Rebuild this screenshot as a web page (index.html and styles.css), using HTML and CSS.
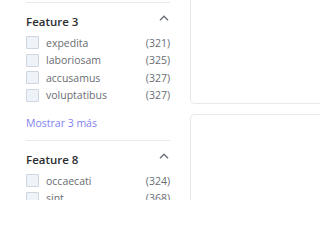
FILE: index.html
```html
<!DOCTYPE html>
<html>
<head>
<meta charset="utf-8">
<link rel="stylesheet" href="styles.css">
</head>
<body>
<div class="page">
  <aside class="sidebar">
    <section class="group">
      <div class="head"><span class="title">Feature 3</span><svg class="chev" width="10" height="6" viewBox="0 0 10 6"><path d="M1 5.2 L5 1.2 L9 5.2" fill="none" stroke="#6b6f75" stroke-width="1.4"/></svg></div>
      <ul class="list">
        <li><span class="box"></span><span class="name">expedita</span><span class="count">(321)</span></li>
        <li><span class="box"></span><span class="name">laboriosam</span><span class="count">(325)</span></li>
        <li><span class="box"></span><span class="name">accusamus</span><span class="count">(327)</span></li>
        <li><span class="box"></span><span class="name">voluptatibus</span><span class="count">(327)</span></li>
      </ul>
      <a class="more">Mostrar 3 más</a>
    </section>
    <section class="group">
      <div class="head"><span class="title">Feature 8</span><svg class="chev" width="10" height="6" viewBox="0 0 10 6"><path d="M1 5.2 L5 1.2 L9 5.2" fill="none" stroke="#6b6f75" stroke-width="1.4"/></svg></div>
      <ul class="list">
        <li><span class="box"></span><span class="name">occaecati</span><span class="count">(324)</span></li>
        <li><span class="box"></span><span class="name">sint</span><span class="count">(368)</span></li>
      </ul>
    </section>
  </aside>
  <div class="main">
    <div class="card card-top"></div>
    <div class="card card-next"></div>
  </div>
</div>
</body>
</html>
```
FILE: styles.css
```css
html, body { margin: 0; padding: 0; background: #fff; }
body { font-family: "Open Sans", "Liberation Sans", sans-serif; overflow: hidden; }
.page { display: flex; height: 200px; }
.sidebar { width: 144px; padding-left: 26px; padding-top: 2px; flex: none; }
.group { border-top: 1px solid #e5eaee; padding-top: 9px; }
.head { display: flex; justify-content: space-between; align-items: center; height: 18px; }
.title { font-size: 11.5px; font-weight: 600; color: #2b2d30; }
.chev { margin-right: 1px; margin-top: -6px; }
.list { list-style: none; margin: 4px 0 0; padding: 0; }
.list li { display: flex; align-items: center; height: 17.5px; font-size: 10.5px; color: #6a6d72; }
.box { width: 11px; height: 11px; border: 1px solid #cfd6e0; background: #eef2f9; border-radius: 1px; flex: none; margin-right: 7px; }
.name { flex: 1; }
.count { color: #6a6d72; }
.more { display: block; margin-top: 12px; margin-bottom: 9px; line-height: 15px; font-size: 10.5px; color: #7f7ff2; }
.main { margin-left: 20px; flex: 1; }
.card { border: 1px solid #e6eaee; border-right: none; }
.card-top { height: 107px; margin-top: -4px; border-top: none; border-radius: 0 0 0 5px; }
.card-next { margin-top: 10px; height: 120px; border-bottom: none; border-radius: 5px 0 0 0; }
```
